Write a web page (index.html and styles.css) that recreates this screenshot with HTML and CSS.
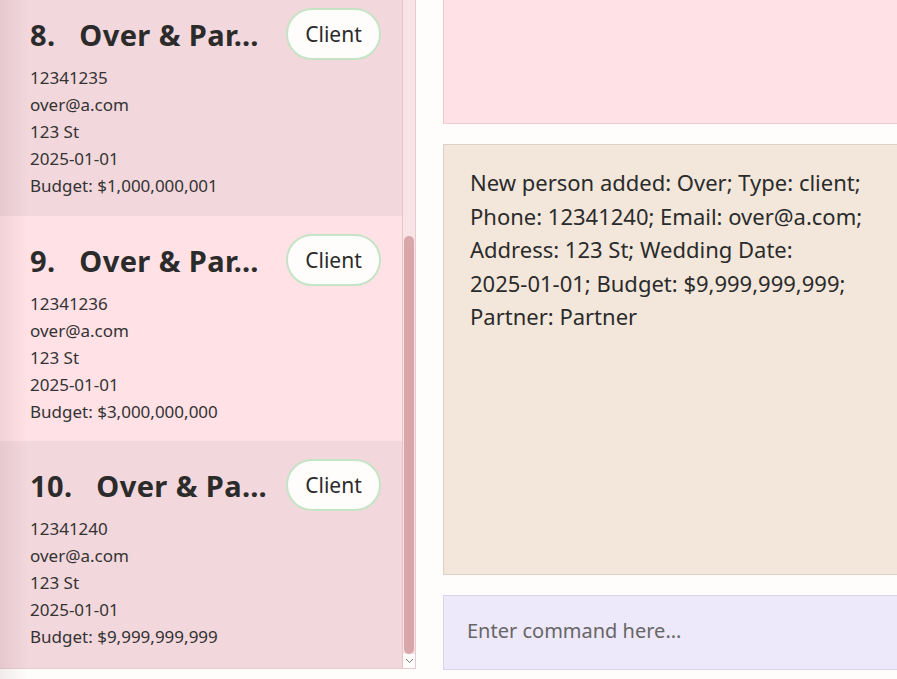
FILE: index.html
```html
<!DOCTYPE html>
<html>
<head>
<meta charset="utf-8">
<link rel="stylesheet" href="styles.css">
</head>
<body>
<div class="app">
  <div class="list-panel">
    <div class="list">
      <div class="list-inner">
        <div class="card card-odd">
          <div class="card-head">
            <div class="card-title">8.&nbsp;&nbsp;&nbsp;Over &amp; Par…</div>
            <div class="badge">Client</div>
          </div>
          <div class="details">
            <div>12341235</div>
            <div>over@a.com</div>
            <div>123 St</div>
            <div>2025-01-01</div>
            <div>Budget: $1,000,000,001</div>
          </div>
        </div>
        <div class="card card-even">
          <div class="card-head">
            <div class="card-title">9.&nbsp;&nbsp;&nbsp;Over &amp; Par…</div>
            <div class="badge">Client</div>
          </div>
          <div class="details">
            <div>12341236</div>
            <div>over@a.com</div>
            <div>123 St</div>
            <div>2025-01-01</div>
            <div>Budget: $3,000,000,000</div>
          </div>
        </div>
        <div class="card card-odd card-last">
          <div class="card-head">
            <div class="card-title">10.&nbsp;&nbsp;&nbsp;Over &amp; Pa…</div>
            <div class="badge">Client</div>
          </div>
          <div class="details">
            <div>12341240</div>
            <div>over@a.com</div>
            <div>123 St</div>
            <div>2025-01-01</div>
            <div>Budget: $9,999,999,999</div>
          </div>
        </div>
      </div>
    </div>
    <div class="scrollbar">
      <div class="scroll-track">
        <div class="scroll-thumb"></div>
      </div>
      <div class="scroll-arrow">
        <svg width="9" height="6" viewBox="0 0 9 6"><path d="M1 1 L4.5 4.5 L8 1" fill="none" stroke="#777" stroke-width="1"/></svg>
      </div>
    </div>
  </div>
  <div class="main">
    <div class="box result-top"></div>
    <div class="box result">
      <p class="result-text">New person added: Over; Type: client; Phone: 12341240; Email: over@a.com; Address: 123 St; Wedding Date:<br>2025-01-01; Budget: $9,999,999,999; Partner: Partner</p>
    </div>
    <div class="box command">
      <span class="placeholder">Enter command here...</span>
    </div>
  </div>
</div>
</body>
</html>
```

FILE: styles.css
```css
html, body {
  margin: 0;
  padding: 0;
  height: 100%;
  overflow: hidden;
}

body {
  background: #fffdfc;
  font-family: "Noto Sans", "Open Sans", sans-serif;
  color: #2e2e2e;
  position: relative;
}

body::before {
  content: "";
  position: absolute;
  left: 0;
  top: 0;
  bottom: 0;
  width: 28px;
  background: linear-gradient(to right, rgba(120, 80, 90, 0.10), rgba(120, 80, 90, 0));
  pointer-events: none;
  z-index: 5;
}

.app {
  display: flex;
  width: 920px;
  height: 679px;
}

.list-panel {
  display: flex;
  width: 416px;
  height: 669px;
  flex: none;
  box-sizing: border-box;
  border-right: 1px solid #e6ccd1;
  border-bottom: 1px solid #e6ccd1;
}

.list {
  width: 402px;
  overflow: hidden;
  border-right: 1px solid #e3c5ca;
}

.list-inner {
  margin-top: -10px;
}

.card {
  height: 226px;
  box-sizing: border-box;
  padding: 18px 21px 0 30px;
}

.card-odd {
  background: #f2d7dc;
}

.card-even {
  background: #ffe1e6;
  height: 225px;
}

.card-last {
  height: 230px;
}

.card-head {
  display: flex;
  align-items: center;
  justify-content: space-between;
  height: 52px;
}

.card-title {
  font-size: 29px;
  font-weight: 700;
  white-space: nowrap;
  color: #2b2b2b;
  letter-spacing: 0.4px;
}

.badge {
  width: 95px;
  height: 52px;
  box-sizing: border-box;
  border: 2.5px solid #c5e4c6;
  border-radius: 26px;
  background: #fffdfc;
  display: flex;
  align-items: center;
  justify-content: center;
  font-size: 21px;
  color: #2b2b2b;
}

.details {
  margin-top: 4px;
  font-size: 17px;
  line-height: 27px;
  color: #333;
}

.scrollbar {
  width: 12px;
  display: flex;
  flex-direction: column;
  background: #f8e4e7;
}

.scroll-track {
  flex: 1;
  padding: 236px 1px 0 1px;
  display: flex;
  flex-direction: column;
}

.scroll-thumb {
  flex: 1;
  background: #d9a6a9;
  border-radius: 6px;
}

.scroll-arrow {
  height: 14px;
  background: #fffdfc;
  display: flex;
  align-items: center;
  justify-content: center;
}

.main {
  flex: 1;
  padding-left: 27px;
  display: flex;
  flex-direction: column;
}

.box {
  box-sizing: border-box;
  margin-right: -20px;
  flex: none;
}

.result-top {
  height: 134px;
  margin-top: -10px;
  background: #ffe1e6;
  border: 1px solid #e8cdd2;
  border-top: none;
}

.result {
  margin-top: 20px;
  height: 431px;
  background: #f3e7dc;
  border: 1px solid #ddd0c4;
  padding: 21px 26px;
}

.result-text {
  margin: 0;
  width: 400px;
  font-size: 22px;
  line-height: 33.5px;
  color: #2b2b2b;
}

.command {
  margin-top: 20px;
  height: 75px;
  background: #eee9fa;
  border: 1px solid #d9d4e6;
  padding: 0 0 4px 23px;
  display: flex;
  align-items: center;
}

.placeholder {
  font-size: 20px;
  color: #666;
}
```
